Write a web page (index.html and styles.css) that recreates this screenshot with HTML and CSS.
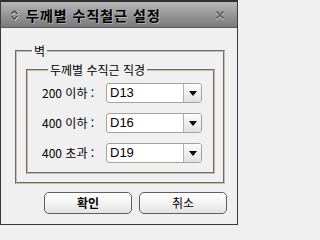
FILE: index.html
```html
<!DOCTYPE html>
<html lang="ko">
<head>
<meta charset="utf-8">
<link rel="stylesheet" href="styles.css">
</head>
<body>
<div class="window">
  <div class="titlebar">
    <svg class="ticon" width="9" height="12" viewBox="0 0 9 12">
      <path d="M1.5 5 L4.5 2 L7.5 5" fill="none" stroke="#e0e0e0" stroke-width="2" transform="translate(0.5 0.5)"/>
      <path d="M1.5 7 L4.5 10 L7.5 7" fill="none" stroke="#e0e0e0" stroke-width="2" transform="translate(0.5 0.5)"/>
      <path d="M1.5 5 L4.5 2 L7.5 5" fill="none" stroke="#4a4a4a" stroke-width="1.6"/>
      <path d="M1.5 7 L4.5 10 L7.5 7" fill="none" stroke="#4a4a4a" stroke-width="1.6"/>
    </svg>
    <span class="title">두께별 수직철근 설정</span>
    <svg class="close" width="10" height="10" viewBox="0 0 10 10">
      <path d="M1.5 1.5 L8.5 8.5 M8.5 1.5 L1.5 8.5" stroke="#cfcfcf" stroke-width="2" transform="translate(0 1)"/>
      <path d="M1.5 1.5 L8.5 8.5 M8.5 1.5 L1.5 8.5" stroke="#666" stroke-width="1.8"/>
    </svg>
  </div>
  <div class="body">
    <fieldset class="group outer">
      <legend>벽</legend>
      <fieldset class="group inner">
        <legend>두께별 수직근 직경</legend>
        <div class="rows">
          <div class="row"><span class="label">200 이하 :</span><div class="combo"><span class="val">D13</span><span class="btn"><i class="tri"></i></span></div></div>
          <div class="row"><span class="label">400 이하 :</span><div class="combo"><span class="val">D16</span><span class="btn"><i class="tri"></i></span></div></div>
          <div class="row"><span class="label">400 초과 :</span><div class="combo"><span class="val">D19</span><span class="btn"><i class="tri"></i></span></div></div>
        </div>
      </fieldset>
    </fieldset>
    <div class="buttons">
      <button class="pbtn bold">확인</button>
      <button class="pbtn">취소</button>
    </div>
  </div>
</div>
</body>
</html>
```

FILE: styles.css
```css
html, body {
  margin: 0;
  padding: 0;
  background: #f0f0f0;
}
.window {
  width: 238px;
  height: 225px;
  box-sizing: border-box;
  border: 1px solid #3a3a3a;
  border-top: 2px solid #2e2e2e;
  background: #f0f0f0;
  display: flex;
  flex-direction: column;
  font-family: "Noto Sans CJK KR", "Liberation Sans", sans-serif;
  color: #000;
}
.titlebar {
  height: 25px;
  border-bottom: 1px solid #5c5c5c;
  background: linear-gradient(#b8b8b8, #9a9a9a 45%, #7a7a7a);
  display: flex;
  align-items: center;
  padding-left: 9px;
  padding-right: 12px;
}
.ticon {
  flex: none;
}
.title {
  margin-left: 7px;
  font-size: 14px;
  font-weight: bold;
  line-height: 16px;
  letter-spacing: 1px;
  text-shadow: 1px 1px 0 rgba(255,255,255,0.35);
  flex: 1;
}
.close {
  flex: none;
  margin-top: 1px;
}
.body {
  flex: 1;
  display: flex;
  flex-direction: column;
}
.group {
  margin: 0;
  padding: 0;
  border: 2px groove #c2bfb0;
  min-width: 0;
}
.group legend {
  margin-left: 6px;
  padding: 0 2px;
  font-size: 12px;
  line-height: 14px;
}
.outer {
  margin: 16px 12px 0 14px;
  padding: 5px 8px 8px 9px;
}
.inner {
  padding: 6px 0 9px 14px;
}
.rows {
  display: flex;
  flex-direction: column;
  gap: 10px;
}
.row {
  display: flex;
  align-items: center;
}
.label {
  width: 64px;
  font-size: 12px;
  line-height: 14px;
}
.combo {
  width: 96px;
  height: 20px;
  box-sizing: border-box;
  border: 1px solid #a2a2a2;
  border-radius: 3px;
  background: #fff;
  display: flex;
  overflow: hidden;
}
.val {
  flex: 1;
  padding-left: 3px;
  font-family: "Liberation Sans", sans-serif;
  font-size: 13px;
  line-height: 18px;
}
.btn {
  width: 17px;
  border-left: 1px solid #b0b0b0;
  background: linear-gradient(#fdfdfd, #e0e0e0);
  display: flex;
  align-items: center;
  justify-content: center;
}
.tri {
  width: 0;
  height: 0;
  border-left: 4px solid transparent;
  border-right: 4px solid transparent;
  border-top: 5px solid #000;
  margin-top: 1px;
}
.buttons {
  margin-top: 8px;
  padding-right: 10px;
  display: flex;
  justify-content: flex-end;
  gap: 7px;
}
.pbtn {
  width: 88px;
  height: 22px;
  border: 1px solid #5e5e5e;
  border-radius: 5px;
  background: linear-gradient(#ffffff, #f4f4f4 50%, #e2e2e2);
  font-family: "Noto Sans CJK KR", sans-serif;
  font-size: 12px;
  line-height: 14px;
  padding: 0;
  color: #000;
}
.pbtn.bold {
  font-weight: bold;
}
```
